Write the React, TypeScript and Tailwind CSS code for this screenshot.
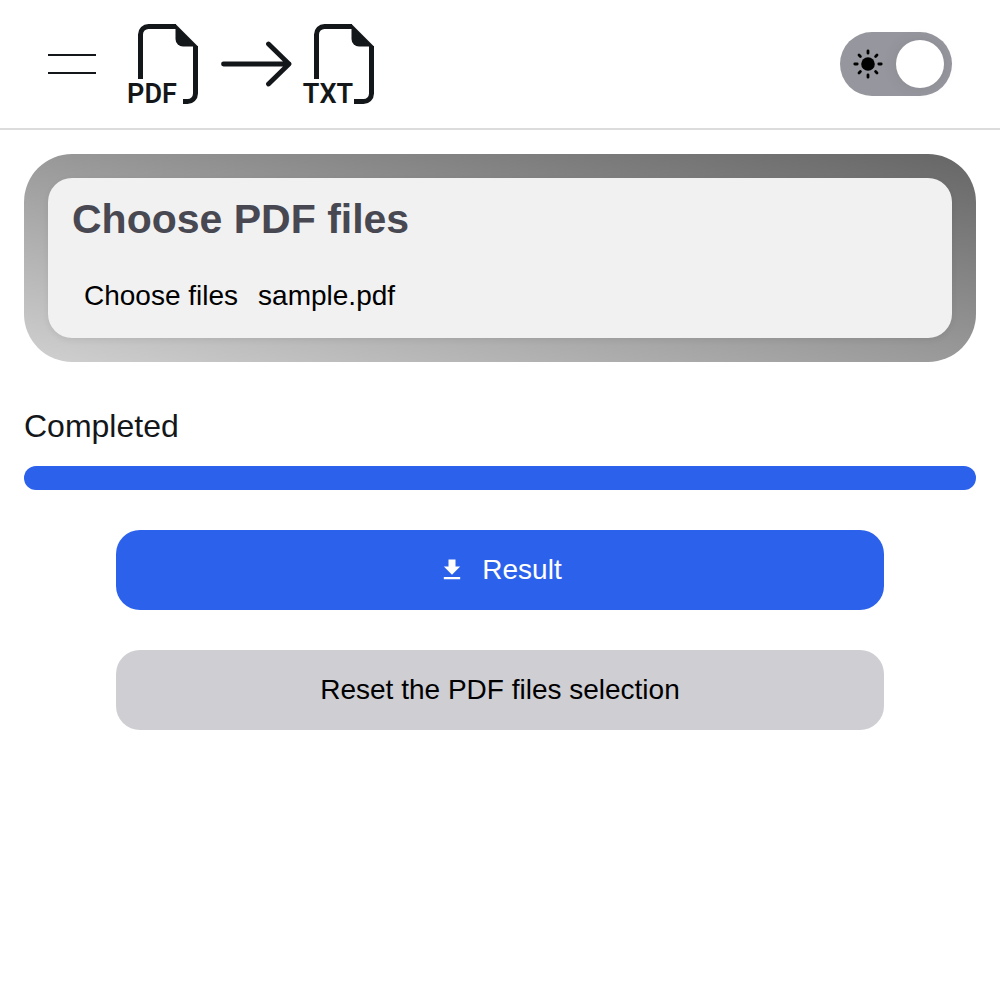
import { useState } from "react";

function FileGlyph({ x, label, footStart }: { x: number; label: string; footStart: number }) {
  return (
    <g transform={`translate(${x} 0)`}>
      <path d="M20.5 55V10.5a8 8 0 0 1 8-8H56" fill="none" stroke="#14171a" strokeWidth="5" />
      <path
        d={`M75.500 22V69.500a8 8 0 0 1-8 8H${footStart}`}
        fill="none"
        stroke="#14171a"
        strokeWidth="5"
      />
      <path d="M55.500 0 78 22.500H63a7.500 7.500 0 0 1-7.500-7.500Z" fill="#14171a" />
      <text
        x="32"
        y="79"
        textAnchor="middle"
        fontFamily="Roboto, sans-serif"
        fontSize="27"
        fontWeight="600"
        fill="#14171a"
      >
        {label}
      </text>
    </g>
  );
}

function Logo() {
  return (
    <svg className="h-20 w-64 overflow-visible" viewBox="0 0 256 80" role="img" aria-label="PDF to TXT">
      <FileGlyph x={0} label="PDF" footStart={63} />
      <path
        d="M103.500 40H169M148.500 20l20.500 20-20.500 20"
        fill="none"
        stroke="#14171a"
        strokeWidth="4.800"
        strokeLinecap="round"
        strokeLinejoin="round"
      />
      <FileGlyph x={176} label="TXT" footStart={58} />
    </svg>
  );
}

function SunIcon() {
  return (
    <svg className="size-8" viewBox="-16 -16 32 32" aria-hidden="true">
      <circle r="6.800" />
      <path
        d="M0-13.200V-10.800M0 10.800v2.400M-13.200 0H-10.800M10.800 0h2.400M-9-9l1.400 1.400M7.600 7.600 9 9M-9 9l1.400-1.400M7.600-7.600 9-9"
        stroke="#000"
        strokeWidth="2.800"
        strokeLinecap="round"
      />
    </svg>
  );
}

function ThemeSwitch() {
  const [light, setLight] = useState(true);
  return (
    <label className="flex h-16 w-28 cursor-pointer items-center justify-between rounded-full bg-[#96969e] pr-2 pl-3">
      <input
        type="checkbox"
        role="switch"
        aria-label="Light theme"
        className="sr-only"
        checked={light}
        onChange={(e) => setLight(e.target.checked)}
      />
      <SunIcon />
      <span className="size-12 rounded-full bg-white shadow-[0_0_16px_rgba(0,0,0,0.08)]" />
    </label>
  );
}

export default function App() {
  return (
    <div className="min-h-screen bg-white font-['Liberation_Sans',Arial,sans-serif] text-[#14171a]">
      <header className="flex items-center justify-between border-b-2 border-[#dcdcdc] px-12 py-6">
        <div className="flex items-center gap-6">
          <button type="button" aria-label="Menu" className="flex w-12 flex-col gap-4">
            <span className="h-0.5 w-full bg-[#14171a]" />
            <span className="h-0.5 w-full bg-[#14171a]" />
          </button>
          <a href="#" className="block">
            <Logo />
          </a>
        </div>
        <ThemeSwitch />
      </header>

      <main className="p-6">
        <section className="rounded-[48px] bg-linear-to-tr from-[#d0d0d0] to-[#666666] p-6">
          <div className="rounded-3xl bg-[#f1f1f1] px-6 py-3 shadow-[0_2px_6px_rgba(0,0,0,0.07)]">
            <h1 className="text-[41px] leading-[58px] font-bold text-[#484852]">Choose PDF files</h1>
            <label className="mt-[18px] flex h-15 cursor-pointer items-center gap-5 px-3 text-[28px] text-black">
              <input type="file" multiple accept="application/pdf" className="sr-only" />
              <span>Choose files</span>
              <span>sample.pdf</span>
            </label>
          </div>
        </section>

        <p id="status" className="mt-10 text-[32px] leading-12">
          Completed
        </p>
        <div
          role="progressbar"
          aria-labelledby="status"
          aria-valuenow={100}
          className="mt-4 h-6 rounded-full bg-[#2c62eb]"
        />

        <div className="mx-auto mt-10 flex max-w-3xl flex-col gap-10 text-[28px]">
          <button
            type="button"
            className="flex h-20 items-center justify-center gap-4 rounded-3xl bg-[#2c62eb] text-white"
          >
            <svg className="size-7" viewBox="0 0 24 24" fill="currentColor" aria-hidden="true">
              <path d="M19 9h-4V3H9v6H5l7 7 7-7zM5 18v2h14v-2H5z" />
            </svg>
            Result
          </button>
          <button type="button" className="h-20 rounded-3xl bg-[#cfced3] text-black">
            Reset the PDF files selection
          </button>
        </div>
      </main>
    </div>
  );
}
